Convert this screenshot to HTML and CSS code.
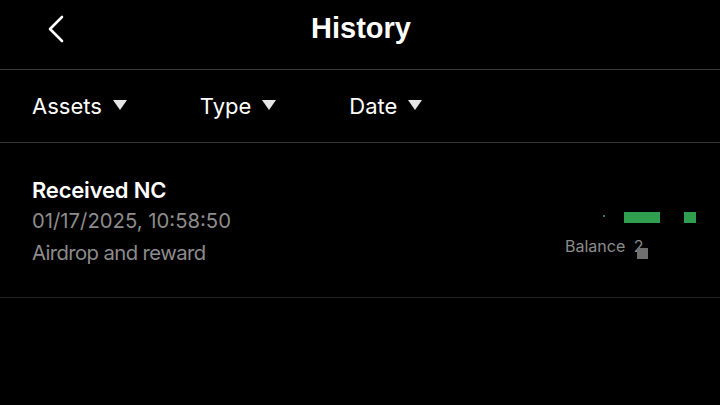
FILE: index.html
```html
<!DOCTYPE html>
<html lang="en">
<head>
    <meta charset="UTF-8">
    <meta name="viewport" content="width=device-width, initial-scale=1.0">
    <title>History</title>
    <link rel="stylesheet" href="styles.css">
</head>
<body>
    <div class="header">
        <div class="back">
            <svg width="18" height="28" viewBox="0 0 18 28">
                <path d="M15 2 L3 14 L15 26" fill="none" stroke="#fff" stroke-width="2.6" stroke-linecap="round" stroke-linejoin="round"/>
            </svg>
        </div>
        <h1>History</h1>
    </div>
    <div class="filters">
        <span class="filter">Assets <i class="caret"></i></span>
        <span class="filter">Type <i class="caret"></i></span>
        <span class="filter">Date <i class="caret"></i></span>
    </div>
    <div class="row">
        <div class="info">
            <div class="title">Received NC</div>
            <div class="sub">01/17/2025, 10:58:50</div>
            <div class="sub sub-note">Airdrop and reward</div>
        </div>
        <div class="amount">
            <div class="bars">
                <span class="dot"></span>
                <span class="bar bar-wide"></span>
                <span class="bar bar-small"></span>
            </div>
            <div class="balance">Balance <span class="digit">2<span class="mask"></span></span></div>
        </div>
    </div>
</body>
</html>
```

FILE: styles.css
```css
body {
    margin: 0;
    background: #000;
    color: #fff;
    font-family: Inter, "Liberation Sans", sans-serif;
    width: 720px;
    height: 405px;
    overflow: hidden;
}
.header {
    height: 69px;
    border-bottom: 1px solid #3a3a3a;
    display: flex;
    align-items: center;
    justify-content: center;
    position: relative;
}
.back {
    position: absolute;
    left: 47px;
    top: 15px;
}
.header h1 {
    margin: 0;
    font-family: "Liberation Sans", sans-serif;
    font-weight: bold;
    font-size: 29px;
    padding-left: 2px;
    margin-top: -12px;
}
.filters {
    height: 72px;
    border-bottom: 1px solid #333;
    display: flex;
    align-items: center;
    padding-left: 32px;
    font-size: 22px;
    gap: 73px;
}
.filter {
    display: flex;
    align-items: center;
}
.caret {
    display: inline-block;
    width: 0;
    height: 0;
    border-left: 7px solid transparent;
    border-right: 7px solid transparent;
    border-top: 10px solid #e6e6e6;
    margin-left: 11px;
    margin-top: -2px;
}
.row {
    height: 154px;
    border-bottom: 1px solid #222;
    display: flex;
    justify-content: space-between;
    padding-left: 32px;
}
.info {
    padding-top: 34px;
}
.title {
    font-size: 22px;
    font-weight: 600;
    line-height: 27px;
    margin-bottom: 4px;
    letter-spacing: -0.2px;
}
.sub {
    font-size: 20.3px;
    color: #8c8c8c;
    line-height: 25px;
    margin-bottom: 7px;
}
.sub-note {
    letter-spacing: -0.6px;
}
.amount {
    width: 155px;
    padding-top: 69px;
}
.bars {
    display: flex;
    align-items: flex-start;
    height: 12px;
}
.dot {
    width: 2px;
    height: 2px;
    background: #1f7a6a;
    margin-left: 38px;
    margin-top: 3px;
}
.bar {
    height: 11px;
    background: #2f9e4f;
}
.bar-wide {
    width: 36px;
    margin-left: 19px;
}
.bar-small {
    width: 12px;
    margin-left: 24px;
}
.balance {
    margin-top: 12px;
    font-size: 16px;
    color: #8c8c8c;
}
.digit {
    position: relative;
    margin-left: 4px;
}
.mask {
    position: absolute;
    left: 3px;
    top: 12px;
    width: 11px;
    height: 11px;
    background: #6f6f6f;
}
```
